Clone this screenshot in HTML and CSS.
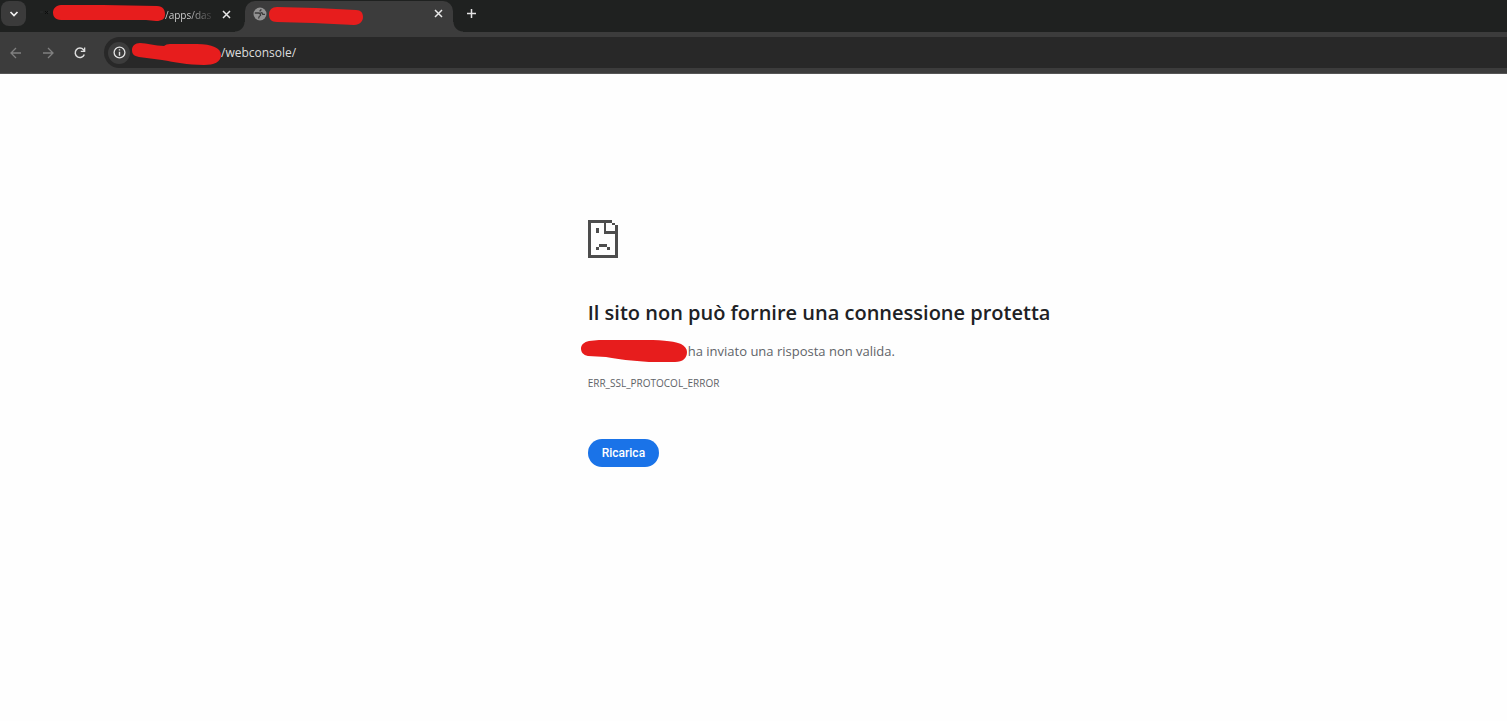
FILE: index.html
```html
<!DOCTYPE html>
<html lang="it">
<head>
<meta charset="utf-8">
<title>Il sito non può fornire una connessione protetta</title>
<link rel="stylesheet" href="styles.css">
</head>
<body>
<header class="browser">
  <div class="tabstrip">
    <button class="tab-search" aria-label="Cerca schede">
      <svg width="10" height="10" viewBox="0 0 10 10"><path d="M1.5 3l3.5 3.5L8.500 3" fill="none" stroke="#f1f1f1" stroke-width="1.7"/></svg>
    </button>
    <div class="tab tab-first">
      <svg class="favicon" width="14" height="14" viewBox="0 0 14 14"><path d="M1 7h3M9 7h2" stroke="#2b2d2c"/><path d="M6 6l3 3M9 6L6 9" stroke="#0c0d0d"/></svg>
      <svg class="mark" width="112" height="17" viewBox="0 0 112 17"><path d="M8 0H50L104 1C110 1 112 5 112 9C112 14 109 16 103 16L93 15H8C2 15 0 11 0 7.500S3 0 8 0Z"/></svg>
      <span class="tab-title">/apps/das</span>
      <button class="close" aria-label="Chiudi scheda"><svg width="9" height="9" viewBox="0 0 9 9"><path d="M1 1l7 7M8 1L1 8"/></svg></button>
    </div>
    <div class="tab tab-active">
      <svg class="globe" width="14" height="14" viewBox="0 0 14 14"><circle cx="7" cy="7" r="6.500" fill="#929292"/><path d="M1.800 6H5.500Q7.800 6.300 7.500 8.500Q5.800 9 5.600 11.500M8.200 2.200Q7.800 3.600 6.500 4.200M7.500 5.500Q9.500 5.500 9.800 7.300H12" fill="none" stroke="#3c3c3c" stroke-width="1.300"/></svg>
      <svg class="mark" width="94" height="18" viewBox="0 0 94 18"><path d="M8 0L47 1L87 3C92 3 94 6 94 10S91 18 85 18L44 16L8 15C2 15 0 12 0 7.500S3 0 8 0Z"/></svg>
      <button class="close" aria-label="Chiudi scheda"><svg width="9" height="9" viewBox="0 0 9 9"><path d="M1 1l7 7M8 1L1 8"/></svg></button>
    </div>
    <button class="new-tab" aria-label="Nuova scheda"><svg width="11" height="11" viewBox="0 0 11 11"><path d="M5.500 1v9M1 5.500h9" stroke="#e3e3e3" stroke-width="1.500"/></svg></button>
  </div>
  <div class="toolbar">
    <button class="nav" aria-label="Indietro" disabled><svg width="12" height="12" viewBox="0 0 12 12"><path d="M11 6H1.500M6 1L1 6l5 5" fill="none" stroke="#808080" stroke-width="1.300"/></svg></button>
    <button class="nav" aria-label="Avanti" disabled><svg width="12" height="12" viewBox="0 0 12 12"><path d="M1 6h9.500M6 1l5 5-5 5" fill="none" stroke="#808080" stroke-width="1.300"/></svg></button>
    <button class="nav" aria-label="Ricarica pagina"><svg width="12" height="12" viewBox="0 0 12 12"><path d="M10.300 7.500A4.700 4.700 0 1 1 9.500 2.700L10.500 4" fill="none" stroke="#dedede" stroke-width="1.500"/><path d="M11.300 0.500v4.500H6.800V3.700H10V0.500Z" fill="#dedede"/></svg></button>
    <div class="omnibox">
      <button class="site-info" aria-label="Informazioni sul sito"><svg width="13" height="13" viewBox="0 0 13 13"><circle cx="6.500" cy="6.500" r="5.400" fill="none" stroke="#e3e3e3" stroke-width="1.300"/><path d="M6.500 5.700v4M6.500 3.200v1.400" stroke="#e3e3e3" stroke-width="1.400"/></svg></button>
      <svg class="mark" width="89" height="23" viewBox="0 0 89 23"><path d="M8 0C15 0 23 3 32 3Q34 1 38 1H65C80 1 89 5 89 12C89 19 82 22 72 22C55 22 43 19 30 17L7 14C2 13 0 11 0 7S3 0 8 0Z"/></svg>
      <input class="url" aria-label="Indirizzo" value="/webconsole/">
    </div>
  </div>
</header>
<main class="error-page">
  <svg class="sad-page" width="30" height="38" viewBox="0 0 30 38" fill="#4d4d4d" shape-rendering="crispEdges"><path d="M0 0H24V3H18V11H27V5H30V38H0ZM3 3V35H27V14H16V3Z" fill-rule="evenodd"/><path d="M24 3h3v2h-3zM8 8h3v5H8zM11 24h8v3h-8zM8 27h3v3H8zM19 27h3v3h-3z"/></svg>
  <h1>Il sito non può fornire una connessione protetta</h1>
  <p class="message">
    <svg class="mark" width="106" height="22" viewBox="0 0 106 22"><path d="M8 1L18 0H65C85 0 95 2 100 4C104 6 106 9 106 12C106 18 102 22 94 22H68C52 21 36 19 25 17L7 16C2 15 0 12 0 8.500S3 2 8 1Z"/></svg>
    <span>ha inviato una risposta non valida.</span>
  </p>
  <p class="code">ERR_SSL_PROTOCOL_ERROR</p>
  <button class="reload">Ricarica</button>
</main>
</body>
</html>
```
FILE: styles.css
```css
* { box-sizing: border-box; }
body {
  margin: 0;
  background: #fefefe;
  font-family: "Open Sans", "Noto Sans", sans-serif;
}
button {
  display: flex;
  align-items: center;
  justify-content: center;
  padding: 0;
  border: 0;
  background: none;
}
svg { display: block; flex: none; }
.mark { fill: #e71d1d; }

.tabstrip {
  display: flex;
  height: 32px;
  background: #1f2120;
}
.tab-search {
  width: 25px;
  height: 25px;
  margin: 1px 0 0 1px;
  border-radius: 8px;
  background: #3b3b3b;
}
.tab { display: flex; }
.tab-first {
  width: 219px;
  padding: 5px 15px 0 13px;
}
.tab-title {
  flex: 1;
  margin-top: 2px;
  font-size: 10px;
  line-height: 16px;
  white-space: nowrap;
  color: transparent;
  background: linear-gradient(90deg, #d8d8d8 50%, #4a4a4a 95%);
  background-clip: text;
}
.close {
  width: 9px;
  height: 9px;
  margin-top: 5px;
}
.close path { stroke: #e8e8e8; stroke-width: 1.5; }
.tab-active {
  position: relative;
  width: 208px;
  margin-top: 1px;
  padding: 6px 10px 0 8px;
  border-radius: 10px 10px 0 0;
  background: #3c3c3c;
}
.tab-active::before,
.tab-active::after {
  content: "";
  position: absolute;
  bottom: 0;
  width: 10px;
  height: 10px;
}
.tab-active::before {
  right: 100%;
  background: radial-gradient(circle at 0 0, transparent 9px, #3c3c3c 10px);
}
.tab-active::after {
  left: 100%;
  background: radial-gradient(circle at 100% 0, transparent 9px, #3c3c3c 10px);
}
.tab-active .mark { margin-left: 2px; }
.tab-active .close { margin: 2px 0 0 auto; }
.tab-first .close { margin-left: 11px; }
.new-tab {
  width: 11px;
  height: 11px;
  margin: 8px 0 0 13px;
}

.toolbar {
  display: flex;
  align-items: center;
  height: 42px;
  border-bottom: 1px solid #555555;
  background: #3c3c3c;
}
.nav {
  width: 32px;
  height: 32px;
}
.omnibox {
  display: flex;
  flex: 1;
  align-items: center;
  height: 31px;
  margin-left: 8px;
  padding-left: 4px;
  border-radius: 16px 0 0 16px;
  background: #282828;
}
.omnibox .mark { margin-top: 4px; }
.site-info {
  width: 22px;
  height: 22px;
  margin-right: 2px;
  border-radius: 50%;
  background: #3c3c3c;
}
.url {
  flex: 1;
  min-width: 0;
  padding: 0;
  border: 0;
  outline: 0;
  background: none;
  color: #dddddd;
  font: 12px/18px "Open Sans", "Noto Sans", sans-serif;
}

.error-page { padding: 146px 20px 40px 39%; }
h1 {
  margin: 41px 0 13px;
  color: #202124;
  font-size: 20px;
  font-weight: 600;
  line-height: 28px;
}
.message {
  display: flex;
  align-items: center;
  margin: 0 0 13px -7px;
  color: #5f6368;
  font-size: 13px;
  line-height: 22px;
}
.message span { margin-left: 1px; }
.code {
  margin: 0;
  color: #5f6368;
  font-size: 10px;
  line-height: 16px;
}
.reload {
  height: 28px;
  margin-top: 48px;
  padding: 0 14px;
  border-radius: 14px;
  background: #1a73e8;
  color: #ffffff;
  font: 500 12px/16px Roboto, sans-serif;
}
```
